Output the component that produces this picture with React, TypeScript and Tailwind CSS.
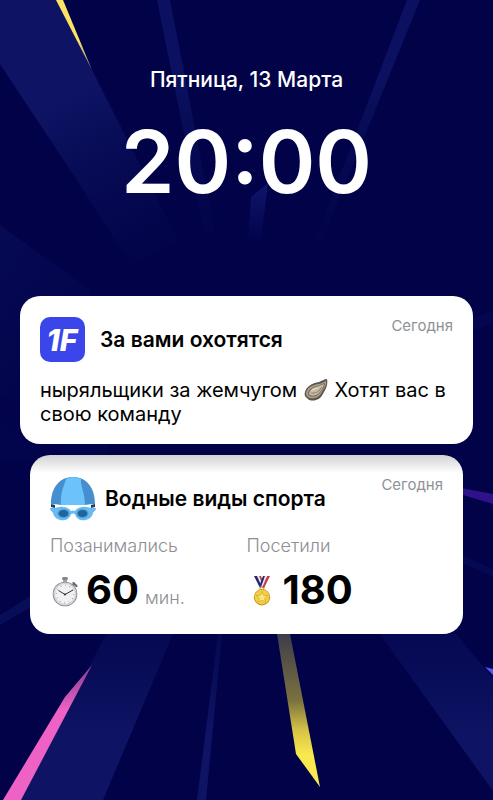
import type { ReactNode } from "react";

interface NotificationCardProps {
  icon: ReactNode;
  title: string;
  time: string;
  className: string;
  headerClassName: string;
  children: ReactNode;
}

interface StatProps {
  label: string;
  icon: ReactNode;
  value: number;
  unit?: string;
}

function Wallpaper() {
  return (
    <svg
      className="absolute inset-0 h-full w-full"
      viewBox="0 0 493 800"
      preserveAspectRatio="xMidYMid slice"
      aria-hidden="true"
    >
      <defs>
        <linearGradient id="beamDown" gradientUnits="userSpaceOnUse" x1="60" y1="100" x2="150" y2="265">
          <stop offset="0" stopColor="#0e1463" />
          <stop offset="0.4" stopColor="#070b55" />
          <stop offset="1" stopColor="#020348" />
        </linearGradient>
        <linearGradient id="thinDown" gradientUnits="userSpaceOnUse" x1="0" y1="80" x2="0" y2="245">
          <stop offset="0" stopColor="#0b1160" />
          <stop offset="0.4" stopColor="#060a54" />
          <stop offset="1" stopColor="#020348" />
        </linearGradient>
        <linearGradient id="side" gradientUnits="userSpaceOnUse" x1="0" y1="230" x2="90" y2="300">
          <stop offset="0" stopColor="#060a53" />
          <stop offset="1" stopColor="#03054c" />
        </linearGradient>
        <linearGradient id="beamUp" gradientUnits="userSpaceOnUse" x1="0" y1="620" x2="0" y2="735">
          <stop offset="0" stopColor="#040750" />
          <stop offset="1" stopColor="#0e1463" />
        </linearGradient>
        <linearGradient id="small" gradientUnits="userSpaceOnUse" x1="0" y1="188" x2="0" y2="240">
          <stop offset="0" stopColor="#0d1568" />
          <stop offset="1" stopColor="#02034a" />
        </linearGradient>
        <linearGradient id="yellow" gradientUnits="userSpaceOnUse" x1="0" y1="634" x2="0" y2="755">
          <stop offset="0" stopColor="#3e3c49" />
          <stop offset="0.55" stopColor="#7b7140" />
          <stop offset="0.8" stopColor="#d7c446" />
          <stop offset="1" stopColor="#fae84f" />
        </linearGradient>
        <linearGradient id="yellowTop" gradientUnits="userSpaceOnUse" x1="0" y1="40" x2="0" y2="68">
          <stop offset="0" stopColor="#fbe463" />
          <stop offset="1" stopColor="#8c8590" />
        </linearGradient>
        <linearGradient id="pink" gradientUnits="userSpaceOnUse" x1="0" y1="664" x2="0" y2="710">
          <stop offset="0" stopColor="#813c92" />
          <stop offset="1" stopColor="#ed62c4" />
        </linearGradient>
      </defs>
      <path d="M0 0H57L92 70L178 240L132 267L80 185L0 64Z" fill="url(#beamDown)" />
      <path d="M56 0H63L92 70Z" fill="url(#yellowTop)" />
      <path d="M157 0H170L215 232H204Z" fill="url(#thinDown)" />
      <path d="M407 0H420L321 243H314Z" fill="url(#thinDown)" />
      <path d="M251 197L268 183L261 240H248Z" fill="url(#small)" />
      <path d="M0 225L90 290L110 460H0Z" fill="url(#side)" />
      <path d="M0 395L60 430V470L0 420Z" fill="#02034a" />
      <path d="M0 615L40 590V602L0 625Z" fill="#080d58" />
      <path d="M440 484L493 494V504L440 488Z" fill="#2f128a" />
      <path d="M440 545L493 569V577L440 553Z" fill="#050852" />
      <path d="M465 322L493 310V324L465 334Z" fill="#040650" />
      <path d="M106 634H173L103 800H20Z" fill="url(#beamUp)" />
      <path d="M218 634H222L206 800H197Z" fill="url(#beamUp)" />
      <path d="M380 634H456L493 678V791Z" fill="url(#beamUp)" />
      <path d="M92 665L65 697L3 800H21Z" fill="url(#pink)" />
      <path d="M277 634H290L320 787L296 754Z" fill="url(#yellow)" />
      <path d="M485 667L493 669V675Z" fill="#5355ed" />
    </svg>
  );
}

function AppLogo() {
  return (
    <svg className="size-[45px]" viewBox="0 0 45 45" role="img" aria-label="1F">
      <rect width="45" height="45" rx="10" fill="#3a46ea" />
      <text
        x="22"
        y="34"
        textAnchor="middle"
        fill="#ffffff"
        className="font-['Inter'] text-[30px] font-extrabold italic"
      >
        1F
      </text>
    </svg>
  );
}

function SwimmerIcon() {
  return (
    <svg className="size-[46px]" viewBox="0 0 46 46" aria-hidden="true">
      <path d="M1 28l4 1v3l-4-1ZM45 28l-4 1v3l4-1Z" fill="#164061" />
      <path d="M1 28C1 11 10 1 23 1s22 10 22 27q-5 0-10 1H11q-5-1-10-1Z" fill="#458fd0" />
      <path d="M16 3q7-4 15 0c-1 6 4 14 4 26H11C10 17 14 10 16 3Z" fill="#6cc3fb" />
      <path
        d="M0 32c4 0 6 0 9-1 6-1 10 1 12 4q2-1 4 0c2-3 6-5 12-4 3 1 5 1 9 1 0 3-2 3-3 5-2 9-16 10-18 1q-2-1-4 0C19 47 5 46 3 37c-1-2-3-2-3-5Z"
        fill="#68baf0"
      />
      <ellipse cx="13.500" cy="37.500" rx="6" ry="4.500" fill="#4d9cd8" />
      <ellipse cx="32.500" cy="37.500" rx="6" ry="4.500" fill="#4d9cd8" />
      <ellipse cx="13.500" cy="37.500" rx="4.800" ry="3.500" fill="#20649c" />
      <ellipse cx="32.500" cy="37.500" rx="4.800" ry="3.500" fill="#20649c" />
    </svg>
  );
}

function OysterIcon() {
  return (
    <svg className="inline-block h-6 w-[26px] align-[-5px]" viewBox="0 0 24 24" role="img" aria-label="Устрица">
      <path
        d="M23 1c-3 0-5 2-8 3C8 5 2 9 1 14c-1 3 0 5 2 6 2 3 6 3 9 2 4-1 6-4 8-8 3-5 4-9 3-13Z"
        fill="#5e564b"
      />
      <path d="M22 3c-3 1-5 3-8 3C8 7 3 10 2 15c0 4 4 6 9 5 4-1 6-4 8-8 2-3 4-6 3-9Z" fill="#aaa08c" />
      <path d="M21 5c-3 1-5 2-8 3-5 1-9 4-9 8 1 3 5 3 8 2 4-2 8-7 9-13Z" fill="#675f52" />
      <path d="M20 6c-3 1-5 2-8 3-4 1-7 4-7 7 1 2 4 2 7 1 4-2 7-6 8-11Z" fill="#c8bda6" />
      <path d="M7 15c5 1 8-1 11-6" fill="none" stroke="#958a77" strokeWidth="1.2" />
      <path d="M8 12q3-2 6-2" fill="none" stroke="#e4dbc7" strokeWidth="1.2" />
    </svg>
  );
}

function StopwatchIcon() {
  return (
    <svg className="h-[31px] w-7" viewBox="0 0 28 31" aria-hidden="true">
      <rect x="13" y="3" width="4" height="4" fill="#a5a5aa" />
      <rect x="12" y="1" width="6" height="3" rx="1.5" fill="#85858a" />
      <path d="M22 10l2.500-2.500" stroke="#85858a" strokeWidth="2" />
      <path d="M23.500 7l3 3" stroke="#66666b" strokeWidth="2.200" strokeLinecap="round" />
      <circle cx="15" cy="18" r="12.300" fill="#808086" />
      <circle cx="15" cy="18" r="11.500" fill="#d3d3d8" />
      <circle cx="15" cy="18" r="10" fill="#f1f1f4" />
      <circle cx="15" cy="18" r="8.800" fill="none" stroke="#77777c" strokeWidth="1.2" strokeDasharray="0.6 4" />
      <path d="M8.500 14.500l6.500 4 8-4.500" fill="none" stroke="#333337" strokeWidth="1" />
      <circle cx="15" cy="18.500" r="1.100" fill="#333337" />
    </svg>
  );
}

function MedalIcon() {
  return (
    <svg className="h-[31px] w-7" viewBox="0 0 28 31" aria-hidden="true">
      <path d="M7 1h4l6 12h-4Z" fill="#25286f" />
      <path d="M10 1h2l5 11h-2Z" fill="#f0eef4" />
      <path d="M12 1h2l4 10-1 2Z" fill="#c93a46" />
      <path d="M20 1h3l-6 12h-4Z" fill="#c93a46" />
      <path d="M18 1h2l-5 12h-2Z" fill="#f0eef4" />
      <path d="M16 1h2l-4 11-1-3Z" fill="#25286f" />
      <circle cx="15" cy="13.500" r="1.800" fill="none" stroke="#a98725" strokeWidth="1" />
      <circle cx="15" cy="22.300" r="8.200" fill="#c99a22" />
      <circle cx="15" cy="22" r="7.300" fill="#f3cf45" />
      <path
        d="M15 16.500l1.600 3.800 4.200.3-3.200 2.700 1 4.100-3.600-2.200-3.600 2.200 1-4.100-3.200-2.700 4.200-.3Z"
        fill="#fbe779"
        stroke="#d0a42c"
        strokeWidth="0.7"
      />
    </svg>
  );
}

function NotificationCard({ icon, title, time, className, headerClassName, children }: NotificationCardProps) {
  return (
    <article className={className}>
      <header className={headerClassName}>
        {icon}
        <h2 className="flex-1 text-[21px] font-semibold leading-7">{title}</h2>
        <time className="self-start text-[15px] leading-[18px] text-[#8e9297]">{time}</time>
      </header>
      {children}
    </article>
  );
}

function Stat({ label, icon, value, unit }: StatProps) {
  return (
    <div>
      <dt className="text-lg font-light leading-6 text-[#8e8e93]">{label}</dt>
      <dd className="mt-3 flex items-center gap-2 leading-10">
        {icon}
        <span className="flex items-baseline gap-1.5">
          <span className="text-[40px] font-bold">{value}</span>
          {unit && <span className="text-lg font-light text-[#8e8e93]">{unit}</span>}
        </span>
      </dd>
    </div>
  );
}

export default function App() {
  return (
    <main className="relative isolate min-h-screen overflow-hidden bg-[#010248] font-['Inter',sans-serif] text-black">
      <Wallpaper />
      <div className="relative px-5 pt-16 pb-10">
        <header className="text-center text-white">
          <p className="text-[21px] font-medium leading-8">Пятница, 13 Марта</p>
          <h1 className="mt-[22px] text-[86px] font-semibold leading-[88px]">20:00</h1>
        </header>

        <section className="mt-[90px] flex flex-col gap-[11px]" aria-label="Уведомления">
          <NotificationCard
            icon={<AppLogo />}
            title="За вами охотятся"
            time="Сегодня"
            className="rounded-[20px] bg-white px-5 pt-[21px] pb-[18px]"
            headerClassName="flex items-center gap-[15px]"
          >
            <p className="mt-4 text-xl leading-6">
              ныряльщики за жемчугом <OysterIcon /> Хотят вас в свою команду
            </p>
          </NotificationCard>

          <NotificationCard
            icon={<SwimmerIcon />}
            title="Водные виды спорта"
            time="Сегодня"
            className="mx-2.5 rounded-[20px] bg-white bg-linear-to-b from-[#d2d2d6] to-white to-[18px] px-5 pt-[21px] pb-[22px]"
            headerClassName="flex items-center gap-[9px]"
          >
            <dl className="mt-3 grid grid-cols-2">
              <Stat label="Позанимались" icon={<StopwatchIcon />} value={60} unit="мин." />
              <Stat label="Посетили" icon={<MedalIcon />} value={180} />
            </dl>
          </NotificationCard>
        </section>
      </div>
    </main>
  );
}
